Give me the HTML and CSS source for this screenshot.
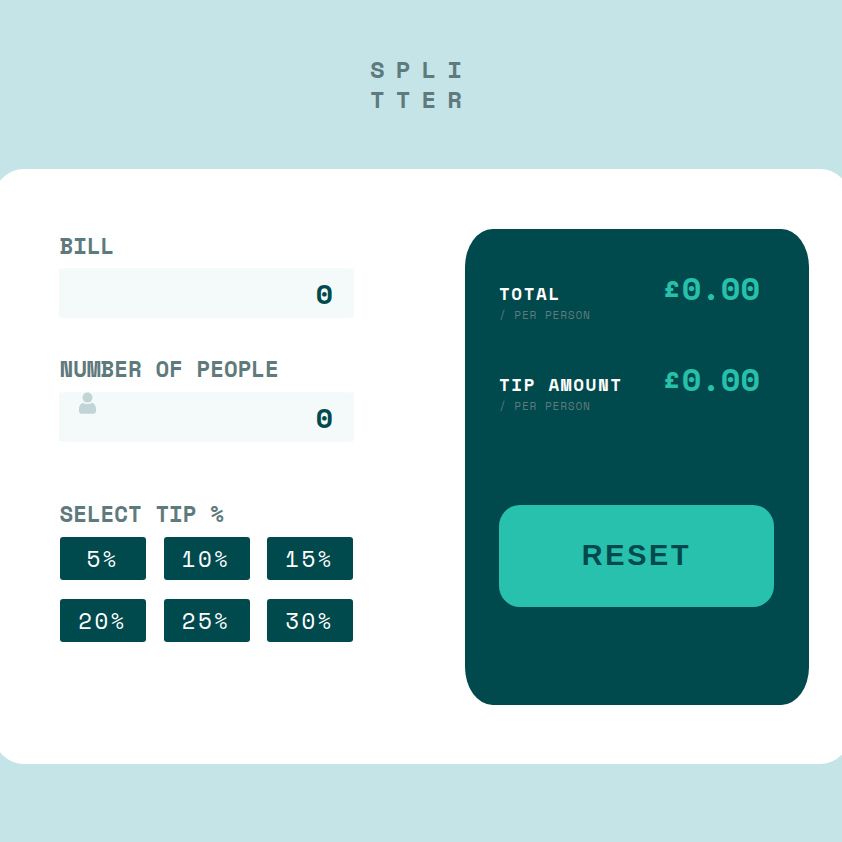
FILE: index.html
```
<!DOCTYPE html>
<html lang="en">
<head>
<meta charset="utf-8">
<title>Splitter</title>
<link rel="stylesheet" href="styles.css">
</head>
<body>
<header class="logo">SPLI<br>TTER</header>
<main class="card">
  <section class="form">
    <label class="label" for="bill">BILL</label>
    <input class="field" id="bill" type="text" value="0">
    <label class="label label-people" for="people">NUMBER OF PEOPLE</label>
    <div class="field-wrap">
      <input class="field" id="people" type="text" value="0">
      <svg class="person" viewBox="0 0 18 22" aria-hidden="true"><circle cx="9" cy="5.6" r="5"/><path d="M4.6 10.7C6 11.7 7.4 12 9 12s3-.3 4.400-1.300c2.600.7 4.100 3 4.100 6v2.500c0 1.500-1 2.500-2.500 2.500H3c-1.500 0-2.500-1-2.500-2.500v-2.500c0-3 1.500-5.300 4.100-6z"/></svg>
    </div>
    <div class="label label-tip">SELECT TIP %</div>
    <div class="tips">
      <button class="tip">5%</button>
      <button class="tip">10%</button>
      <button class="tip">15%</button>
      <button class="tip">20%</button>
      <button class="tip">25%</button>
      <button class="tip">30%</button>
    </div>
  </section>
  <section class="panel">
    <div class="result">
      <div><div class="name">TOTAL</div><div class="per">/ PER PERSON</div></div>
      <div class="amount">£0.00</div>
    </div>
    <div class="result">
      <div><div class="name">TIP AMOUNT</div><div class="per">/ PER PERSON</div></div>
      <div class="amount">£0.00</div>
    </div>
    <button class="reset">RESET</button>
  </section>
</main>
</body>
</html>
```
FILE: styles.css
```
* { box-sizing: border-box; }
body {
  margin: 0;
  height: 842px;
  overflow: hidden;
  background: #c5e4e7;
  color: #5e7a7d;
  font-family: "Space Mono", "Liberation Mono", monospace;
  font-weight: 700;
}
.logo {
  height: 169px;
  padding: 54px 0 0 370px;
  font-size: 24px;
  line-height: 30px;
  letter-spacing: 11.100px;
}
.card {
  display: flex;
  justify-content: space-between;
  align-items: flex-start;
  width: 856px;
  height: 595px;
  margin-left: -6px;
  padding: 60px 41px 0 65px;
  background: #fff;
  border-radius: 30px;
}
.form { width: 295px; padding-top: 2px; }
.label {
  display: block;
  height: 37px;
  padding-left: .5px;
  font-size: 22.400px;
  line-height: 30px;
  white-space: nowrap;
}
.label-people { margin-top: 36px; height: 38px; }
.label-tip { margin-top: 57px; height: 38px; }
.field-wrap { position: relative; }
.field {
  display: block;
  width: 295px;
  height: 50px;
  border: 0;
  padding: 1px 21px 0 60px;
  border-radius: 3%;
  background: #f4fafa;
  color: #00494d;
  font: inherit;
  font-size: 28px;
  text-align: right;
}
.person {
  position: absolute;
  left: 19px;
  top: 0;
  width: 19px;
  height: 22px;
  fill: #c1d5d7;
}
.tips {
  display: grid;
  grid-template-columns: repeat(3, 86px);
  justify-content: space-between;
  row-gap: 19px;
  padding: 0 1px;
}
.tip {
  height: 43px;
  padding: 0 1px 1px 0;
  border: 0;
  border-radius: 3px;
  background: #00494d;
  color: #fff;
  font-family: inherit;
  font-size: 22.400px;
  font-weight: 400;
  letter-spacing: 2.400px;
}
.panel {
  width: 344px;
  height: 476px;
  padding: 42px 35px 0 34px;
  border-radius: 8%;
  background: #00494d;
}
.result {
  display: flex;
  justify-content: space-between;
  height: 91px;
  padding: 0 14px 0 0;
}
.name {
  margin-top: 10px;
  color: #fff;
  font-size: 17.600px;
  line-height: 24px;
  letter-spacing: 1.600px;
}
.per {
  margin-top: 2px;
  font-size: 11.200px;
  font-weight: 400;
  line-height: 16px;
  letter-spacing: .8px;
}
.amount {
  color: #26c0ab;
  font-size: 32px;
  line-height: 34px;
}
.reset {
  display: block;
  width: 275px;
  height: 102px;
  margin-top: 52px;
  padding: 0 0 2px;
  border: 0;
  border-radius: 21px;
  background: #28c1ad;
  color: #00494d;
  font: 700 28.800px "Liberation Sans", Arial, sans-serif;
  letter-spacing: 2.700px;
}
```
